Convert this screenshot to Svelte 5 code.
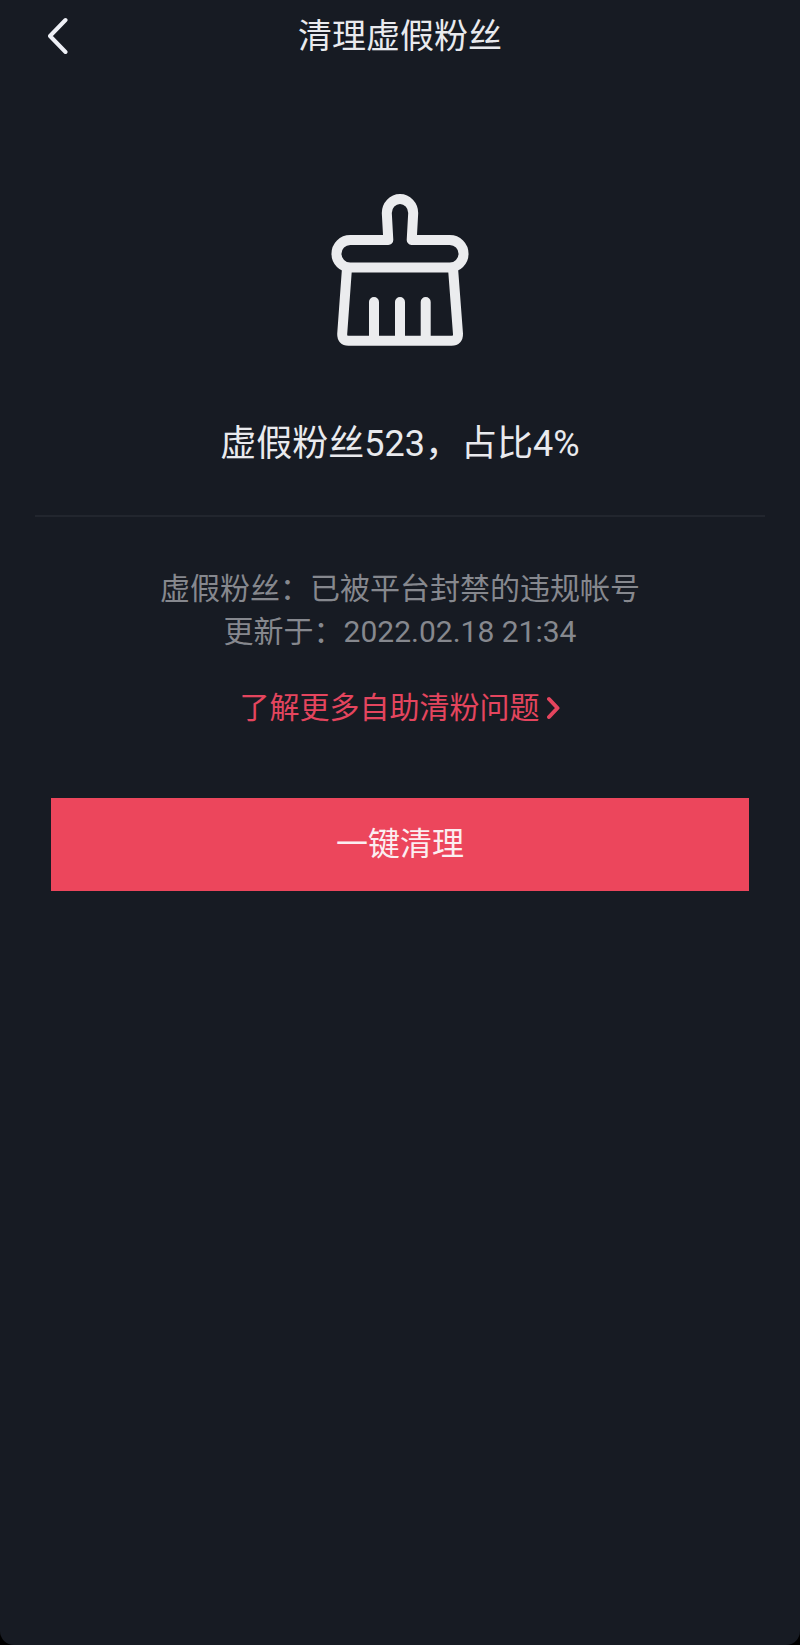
<script>
  let fakeFans = 523;
  let percent = 4;
  let updatedAt = '2022.02.18 21:34';
</script>

<div class="page">
  <header>
    <button class="back" aria-label="返回">
      <svg width="24" height="40" viewBox="0 0 24 40">
        <path d="M17.5 4L2 20L17.5 36" />
      </svg>
    </button>
    <h1>清理虚假粉丝</h1>
  </header>

  <main>
    <section class="summary">
      <svg class="brush" width="138" height="154" viewBox="0 0 138 154">
        <path d="M19.2 47H57.3L55.8 20A13.2 14 0 0 1 82.2 20L80.7 47H118.8A13.75 13.75 0 0 1 118.8 74.5H19.2A13.75 13.75 0 0 1 19.2 47Z" />
        <path d="M16 75L11.2 141Q11 147.7 17.5 147.7H120.5Q127.2 147.7 127 141L122 75" />
        <path d="M43 146V109M69 146V109M94.7 146V109" />
      </svg>
      <p class="count">虚假粉丝{fakeFans}，占比{percent}%</p>
    </section>

    <section class="info">
      <p>虚假粉丝：已被平台封禁的违规帐号</p>
      <p>更新于：{updatedAt}</p>
    </section>

    <a class="more" href="#help">
      了解更多自助清粉问题
      <svg width="14" height="24" viewBox="0 0 14 24">
        <path d="M2 3L10.5 12L2 21" />
      </svg>
    </a>

    <button class="clean">一键清理</button>
  </main>
</div>

<style>
  :global(body) {
    margin: 0;
    background: #000;
  }

  .page {
    box-sizing: border-box;
    min-height: 100vh;
    background: #171b23;
    border-radius: 0 0 14px 14px;
    color: #e9eaee;
    font-family: Roboto, "Noto Sans CJK SC", sans-serif;
  }

  header {
    display: grid;
    grid-template-columns: 48px 1fr 48px;
    align-items: center;
    height: 72px;
    padding: 0 32px;
  }

  .back {
    display: flex;
    padding: 0 16px;
    border: none;
    background: none;
    cursor: pointer;
  }

  svg {
    flex: none;
    fill: none;
    stroke: currentColor;
    stroke-linecap: round;
    stroke-linejoin: round;
  }

  .back svg {
    color: #eef0f6;
    stroke-width: 4;
  }

  h1 {
    margin: 0;
    font-size: 34px;
    font-weight: 400;
    line-height: 48px;
    text-align: center;
  }

  main {
    display: flex;
    flex-direction: column;
    padding: 0 35px;
  }

  p {
    margin: 0;
  }

  .summary {
    display: flex;
    flex-direction: column;
    align-items: center;
    gap: 73px;
    padding: 121px 0 47px;
    border-bottom: 2px solid #22262e;
  }

  .brush {
    color: #ebecee;
    stroke-width: 10;
  }

  .count {
    font-size: 36px;
    line-height: 48px;
  }

  .info {
    padding-top: 50px;
    color: #86888e;
    font-size: 30px;
    line-height: 43px;
    text-align: center;
  }

  .more {
    display: flex;
    align-items: center;
    align-self: center;
    gap: 7px;
    margin-top: 33px;
    color: #e4455e;
    font-size: 30px;
    line-height: 44px;
    text-decoration: none;
  }

  .more svg {
    stroke-width: 4;
  }

  .clean {
    margin: 68px 16px 0;
    padding: 22px 0 23px;
    border: none;
    background: #ec465c;
    color: #fbeef1;
    font-family: inherit;
    font-size: 32px;
    line-height: 48px;
    cursor: pointer;
  }
</style>
